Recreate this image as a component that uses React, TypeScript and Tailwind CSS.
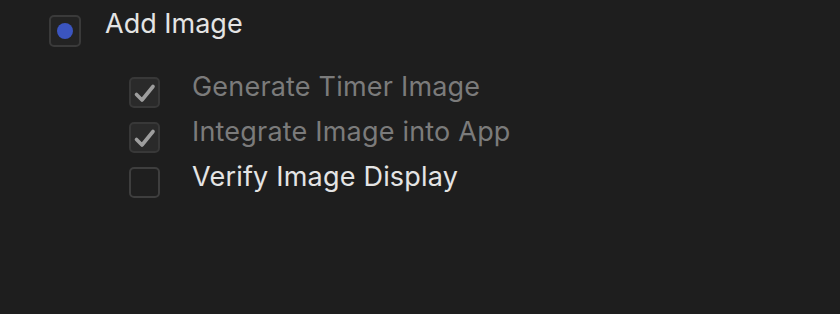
import React from "react";

function Check() {
  return (
    <svg width="27" height="27" viewBox="2 2 27 27" fill="none">
      <path d="M7.5 17.5 L13 23 L24 9.5" stroke="#9e9e9e" strokeWidth="3.6" strokeLinecap="round" strokeLinejoin="round" />
    </svg>
  );
}

function Sub({ label, done }: { label: string; done: boolean }) {
  return (
    <div className="flex items-start h-[45px]">
      <div
        className={`mt-[7px] w-[31px] h-[31px] rounded-[5px] border-2 flex items-center justify-center shrink-0 ${
          done ? "border-[#383838] bg-[#2a2a2a]" : "border-[#3e3e3e] bg-[#1f1f1f]"
        }`}
      >
        {done && <Check />}
      </div>
      <span
        className={`ml-[32px] text-[27px] leading-[34px] tracking-[0.2px] ${done ? "text-[#7b7b7b]" : "text-[#e4e4e4]"}`}
      >
        {label}
      </span>
    </div>
  );
}

export default function App() {
  return (
    <div
      className="w-[840px] h-[314px] bg-[#1e1e1e] overflow-hidden"
      style={{ fontFamily: "Inter, 'Noto Sans', sans-serif" }}
    >
      <div className="pl-[49px] pt-[7px] flex flex-col">
        <div className="flex items-start">
          <div className="mt-[8px] w-[32px] h-[32px] rounded-[5px] border-2 border-[#3a3a3a] bg-[#232323] flex items-center justify-center shrink-0">
            <div className="w-[16px] h-[16px] rounded-full bg-[#3b55c0]" />
          </div>
          <span className="ml-[24px] text-[27px] leading-[34px] text-[#e4e4e4]">Add Image</span>
        </div>
        <div className="pl-[80px] mt-[23px] flex flex-col">
          <Sub label="Generate Timer Image" done />
          <Sub label="Integrate Image into App" done />
          <Sub label="Verify Image Display" done={false} />
        </div>
      </div>
    </div>
  );
}
